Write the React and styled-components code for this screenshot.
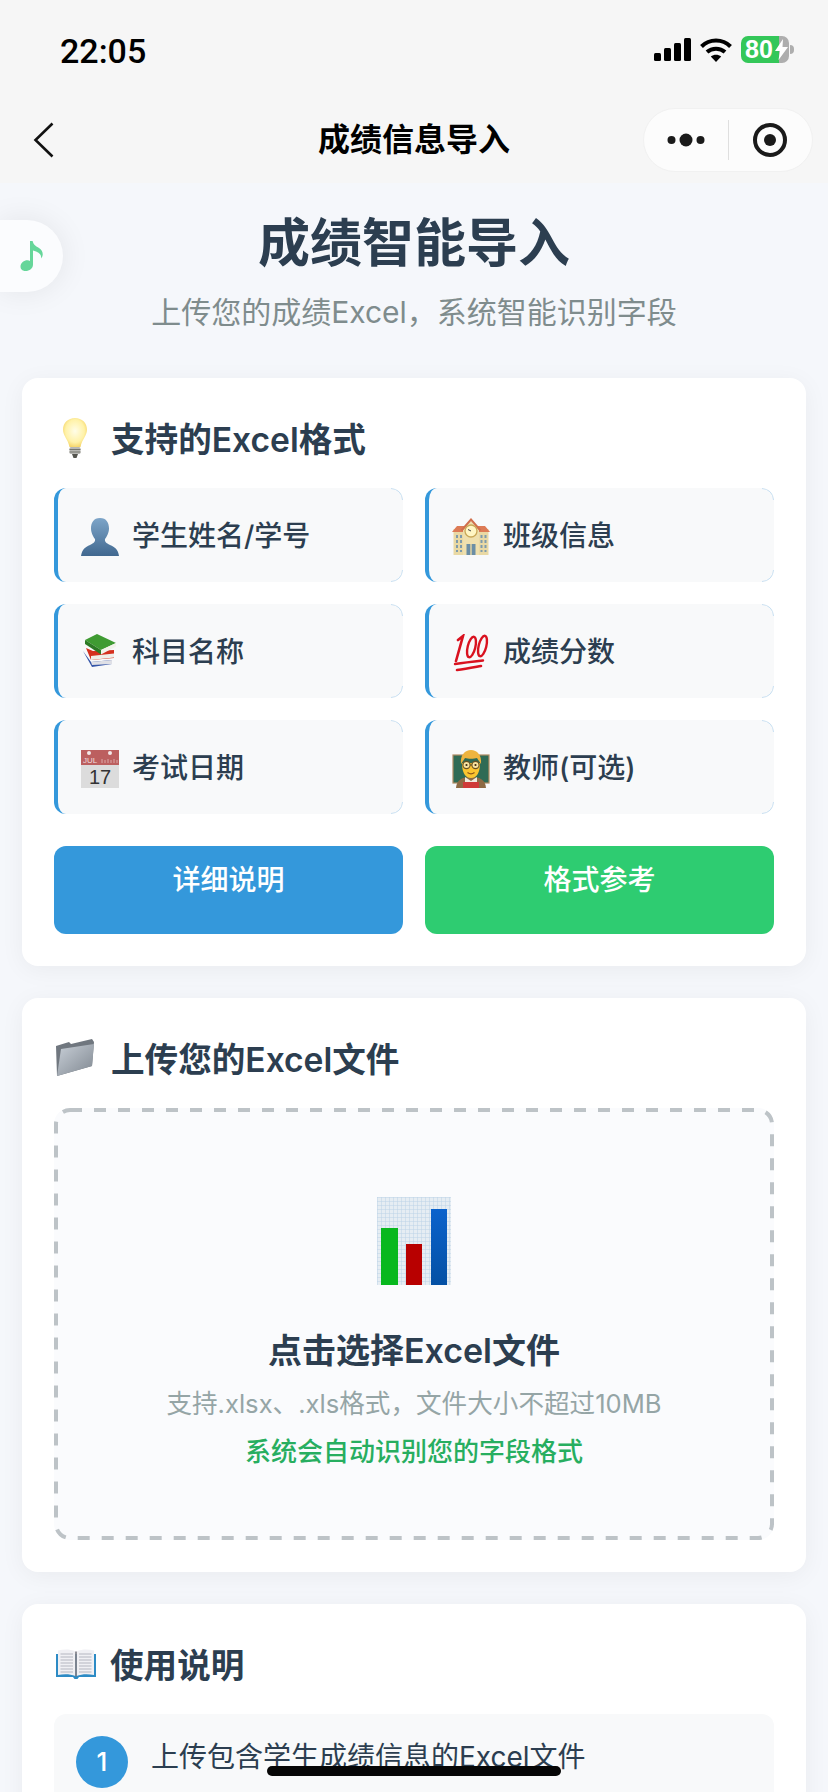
import styled, { createGlobalStyle } from "styled-components";

const GlobalStyle = createGlobalStyle`
  html, body {
    margin: 0;
    padding: 0;
    background: #f5f7fb;
  }
  * {
    box-sizing: border-box;
  }
  body {
    font-family: Inter, "Noto Sans CJK SC", sans-serif;
    color: #2c3e50;
  }
`;

const Phone = styled.div`
  position: relative;
  width: 828px;
  height: 1792px;
  overflow: hidden;
  background: #f5f7fb;
`;

const TopBar = styled.header`
  height: 183px;
  background: #f6f6f6;
  display: flex;
  flex-direction: column;
`;

const StatusBar = styled.div`
  height: 108px;
  padding: 30px 34px 0 60px;
  display: flex;
  justify-content: space-between;
  align-items: flex-start;
`;

const Clock = styled.span`
  font-family: Roboto, sans-serif;
  font-size: 34px;
  line-height: 38px;
  font-weight: 500;
  color: #000;
  padding-top: 2px;
`;

const StatusIcons = styled.div`
  display: flex;
  align-items: center;
  gap: 9px;
  padding-top: 6px;
`;

const Battery = styled.div`
  position: relative;
  width: 48px;
  height: 27px;
  margin-right: 5px;
  border-radius: 7px;
  overflow: visible;
  background: linear-gradient(to right, #34c759 0 38px, #aeaeae 38px);
  color: #fff;
  font-family: "Liberation Sans", sans-serif;
  font-size: 25px;
  line-height: 27px;
  font-weight: 700;
  padding-left: 4px;

  &::after {
    content: "";
    position: absolute;
    right: -5px;
    top: 9px;
    width: 4px;
    height: 9px;
    border-radius: 0 4px 4px 0;
    background: #aeaeae;
  }

  svg {
    position: absolute;
    right: 1px;
    top: 3px;
  }
`;

const NavBar = styled.nav`
  position: relative;
  height: 64px;
  display: flex;
  align-items: center;
  justify-content: center;
`;

const BackButton = styled.div`
  position: absolute;
  left: 33px;
  top: 14px;
  display: flex;
`;

const NavTitle = styled.h1`
  margin: 0;
  font-size: 32px;
  font-weight: 700;
  line-height: 64px;
  color: #000;
`;

const Capsule = styled.div`
  position: absolute;
  left: 643px;
  top: 0;
  width: 170px;
  height: 64px;
  border-radius: 32px;
  background: #fcfcfc;
  border: 1px solid #f1f1f1;
  display: flex;
  align-items: center;
`;

const CapsulePart = styled.div`
  flex: 1;
  display: flex;
  align-items: center;
  justify-content: center;
`;

const CapsuleDivider = styled.div`
  width: 1px;
  height: 40px;
  background: #dfdfdf;
`;

const MusicTab = styled.div`
  position: absolute;
  left: 0;
  top: 220px;
  width: 63px;
  height: 72px;
  border-radius: 0 36px 36px 0;
  background: #fbfcfe;
  box-shadow: 0 0 30px rgba(0, 0, 0, 0.08);
  display: flex;
  align-items: center;
  padding-left: 20px;
`;

const Content = styled.main`
  padding: 0 22px;
  display: flex;
  flex-direction: column;
  gap: 32px;
`;

const Hero = styled.div`
  height: 195px;
  margin-bottom: -32px;
  text-align: center;
`;

const HeroTitle = styled.h2`
  margin: 0;
  padding-top: 27px;
  font-size: 52px;
  line-height: 68px;
  font-weight: 700;
  color: #2c3e50;
`;

const HeroSub = styled.p`
  margin: 0;
  padding-top: 14px;
  font-size: 30px;
  line-height: 40px;
  color: #7f8c8d;
`;

const Card = styled.section`
  background: #fff;
  border-radius: 16px;
  padding: 32px;
  box-shadow: 0 4px 24px rgba(0, 0, 0, 0.05);
`;

const CardTitle = styled.div`
  display: flex;
  align-items: center;
  gap: ${({ $gap }) => $gap}px;
  height: 78px;
  padding: 0 0 23px ${({ $indent }) => $indent}px;
  font-size: 33.6px;
  font-weight: 600;
  color: #2c3e50;
`;

const Grid = styled.div`
  display: grid;
  grid-template-columns: repeat(2, 1fr);
  gap: 22px;
`;

const Item = styled.div`
  position: relative;
  height: 94px;
  padding: 0 0 2px 23px;
  display: flex;
  align-items: center;
  gap: 13px;
  background: #f8f9fa;
  border-left: 4px solid #3498db;
  border-radius: 12px;
  font-size: 28px;
  font-weight: 500;
  color: #2c3e50;

  &::after {
    content: "";
    position: absolute;
    inset: 0 0 0 -4px;
    border: 1px solid #c6dff2;
    border-radius: 12px;
    mask: linear-gradient(#000 0 0) top right / 12px 12px no-repeat,
      linear-gradient(#000 0 0) bottom right / 12px 12px no-repeat;
  }
`;

const ItemIcon = styled.span`
  width: 38px;
  height: 38px;
  display: flex;
  flex-shrink: 0;
  margin-top: ${({ $lift }) => ($lift ? 0 : 6)}px;
`;

const Actions = styled.div`
  display: grid;
  grid-template-columns: repeat(2, 1fr);
  gap: 22px;
  margin-top: 32px;
`;

const ActionButton = styled.button`
  height: 88px;
  padding: 0 0 20px;
  border: none;
  border-radius: 12px;
  background: ${({ $color }) => $color};
  color: #fff;
  font: inherit;
  font-size: 28px;
  line-height: 44px;
  font-weight: 500;
  text-align: center;
`;

const DropZone = styled.div`
  position: relative;
  height: 432px;
  padding-top: 89px;
  background: #fafbfd;
  border-radius: 16px;
  display: flex;
  flex-direction: column;
  align-items: center;
`;

const DashedEdge = styled.svg`
  position: absolute;
  inset: 0;
  width: 100%;
  height: 100%;

  rect {
    x: 2px;
    y: 2px;
    width: calc(100% - 4px);
    height: calc(100% - 4px);
    fill: none;
    stroke: #bdc3c7;
    stroke-width: 4px;
    stroke-dasharray: 12 12;
  }
`;

const DropTitle = styled.div`
  margin-top: 44px;
  font-size: 34px;
  line-height: 44px;
  font-weight: 600;
  color: #2c3e50;
`;

const DropHint = styled.div`
  margin-top: 13px;
  font-size: 25.6px;
  line-height: 36px;
  color: #95a5a6;
`;

const DropNote = styled.div`
  margin-top: 12px;
  font-size: 26px;
  line-height: 36px;
  font-weight: 500;
  color: #27ae60;
`;

const Step = styled.div`
  height: 140px;
  padding: 22px 22px 0;
  background: #f8f9fa;
  border-radius: 12px;
  display: flex;
  align-items: flex-start;
  gap: 23px;
`;

const StepNumber = styled.span`
  width: 52px;
  height: 52px;
  border-radius: 50%;
  background: #3498db;
  color: #fff;
  font-size: 26px;
  font-weight: 500;
  line-height: 52px;
  text-align: center;
  flex-shrink: 0;
`;

const StepText = styled.span`
  font-size: 28px;
  line-height: 42px;
  color: #2c3e50;
`;

const HomeBar = styled.div`
  position: absolute;
  left: 267px;
  top: 1766px;
  width: 294px;
  height: 10px;
  border-radius: 5px;
  background: #060606;
`;

const Signal = () => (
  <svg width="37" height="23" viewBox="0 0 37 23">
    <rect x="0" y="15" width="7" height="8" rx="1.5" fill="#000" />
    <rect x="10" y="10" width="7" height="13" rx="1.5" fill="#000" />
    <rect x="20" y="5" width="7" height="18" rx="1.5" fill="#000" />
    <rect x="30" y="0" width="7" height="23" rx="1.5" fill="#000" />
  </svg>
);

const Wifi = () => (
  <svg width="32" height="24" viewBox="0 0 32 24" fill="none" stroke="#000" strokeWidth="4">
    <path d="M1.5 8.5C9.5 0.5 22.5 0.5 30.5 8.5" />
    <path d="M7 14C12 9.5 20 9.5 25 14" />
    <path d="M16 24L10.8 18.6C13.8 16 18.2 16 21.2 18.6Z" fill="#000" stroke="none" />
  </svg>
);

const Bolt = () => (
  <svg width="13" height="21" viewBox="0 0 13 21">
    <path d="M8 0L0 12H5L3.5 21L13 8H7.5Z" fill="#fff" />
  </svg>
);

const Back = () => (
  <svg width="22" height="36" viewBox="0 0 22 36" fill="none" stroke="#111" strokeWidth="2.6">
    <path d="M19.5 1.5L2.5 18L19.5 34.5" />
  </svg>
);

const Dots = () => (
  <svg width="38" height="14" viewBox="0 0 38 14" fill="#1a1a1a">
    <circle cx="4.5" cy="7" r="4" />
    <circle cx="19" cy="7" r="6.5" />
    <circle cx="33.5" cy="7" r="4" />
  </svg>
);

const Target = () => (
  <svg width="36" height="36" viewBox="0 0 36 36">
    <circle cx="18" cy="18" r="15" fill="none" stroke="#1a1a1a" strokeWidth="4" />
    <circle cx="18" cy="18" r="6" fill="#1a1a1a" />
  </svg>
);

const MusicNote = () => (
  <svg width="24" height="30" viewBox="0 0 24 30" fill="#66d69a">
    <path d="M10 0H12.6C13.4 4 16 5 19 7C23 9.8 24 14 21 17.5C21.8 13.6 19 11 13 9.5V23.5C13 27.5 9.5 30 5.5 30C2 30 0.5 27.8 0.5 25.5C0.5 22 4 19.3 7.5 19.3C8.5 19.3 9.4 19.5 10 19.9Z" />
  </svg>
);

const Bulb = () => (
  <svg width="24" height="40" viewBox="0 0 24 40">
    <defs>
      <radialGradient id="bulbGlow" cx="0.5" cy="0.45" r="0.6">
        <stop offset="0" stopColor="#fffde8" />
        <stop offset="0.65" stopColor="#fff2a8" />
        <stop offset="1" stopColor="#f3cf5c" />
      </radialGradient>
    </defs>
    <path d="M12 0C5 0 0 5 0 11.5C0 18 5 21 6.5 29H17.5C19 21 24 18 24 11.5C24 5 19 0 12 0Z" fill="url(#bulbGlow)" />
    <rect x="6.5" y="29" width="11" height="7" rx="1.5" fill="#b8b8b4" />
    <path d="M6.5 31.5H17.5M6.5 34H17.5" stroke="#77776f" strokeWidth="1" />
    <path d="M9 36H15L13.5 40H10.5Z" fill="#55554f" />
  </svg>
);

const Person = () => (
  <svg width="38" height="38" viewBox="0 0 38 38">
    <defs>
      <linearGradient id="personFill" x1="0" y1="0" x2="0" y2="1">
        <stop offset="0" stopColor="#7da5c8" />
        <stop offset="1" stopColor="#41688f" />
      </linearGradient>
    </defs>
    <path d="M19 0C12.5 0 10 5 10 10.5C10 15 12.5 19 14 21C14.5 23.5 13 25 9 27C4 29 1 31.5 0 38H38C37 31.5 34 29 29 27C25 25 23.5 23.5 24 21C25.5 19 28 15 28 10.5C28 5 25.5 0 19 0Z" fill="url(#personFill)" />
  </svg>
);

const School = () => (
  <svg width="38" height="38" viewBox="0 0 38 38">
    <rect x="1.5" y="11" width="35" height="26" fill="#e9d9a4" />
    <path d="M0 14L5 8H33L38 14Z" fill="#dd7b55" />
    <path d="M11 12L19 3L27 12V37H11Z" fill="#efe0ae" />
    <path d="M9.5 12.5L19 1.5L28.5 12.5" fill="none" stroke="#d06f4c" strokeWidth="2" />
    <circle cx="19" cy="13" r="6" fill="#fff6c4" stroke="#c9a858" strokeWidth="1.3" />
    <path d="M19 13L16 11.5" stroke="#444" strokeWidth="1" />
    <rect x="14.5" y="26" width="9" height="11" fill="#6b8ea5" />
    <path d="M19 26V37" stroke="#e9d9a4" strokeWidth="1.4" />
    <path d="M5 17V34M9 17V34M29.5 17V34M33.5 17V34" stroke="#7f9bab" strokeWidth="2" strokeDasharray="3 2" />
  </svg>
);

const Books = () => (
  <svg width="38" height="38" viewBox="0 0 38 38">
    <path d="M2 20L11 36L31 33L31 29L10 31Z" fill="#3556a8" />
    <path d="M10 31L31 29L31 33L11 34Z" fill="#dfe0e6" />
    <path d="M5 17L10 29L33 27V19L12 20Z" fill="#d5301e" />
    <path d="M10 25L33 22.5V26.5L10 29Z" fill="#efeee8" />
    <path d="M4 9L16 3L35 12L20 19Z" fill="#3f9b32" />
    <path d="M4 9L20 19V23.5L4 13Z" fill="#2c7a24" />
    <path d="M20 19L35 12L35 15.5L20 23.5Z" fill="#f2f2ea" />
  </svg>
);

const Hundred = () => (
  <svg width="38" height="38" viewBox="0 0 38 38" fill="none" stroke="#d9121f" strokeLinecap="round">
    <path d="M4 27L11 2L6 6" strokeWidth="2.6" />
    <ellipse cx="19.5" cy="13" rx="3.8" ry="10.5" transform="rotate(14 19.5 13)" strokeWidth="2.4" />
    <ellipse cx="30.5" cy="12" rx="3.8" ry="10.5" transform="rotate(14 30.5 12)" strokeWidth="2.4" />
    <path d="M3 30C13 28.5 22 27.5 31 26.5" strokeWidth="2.4" />
    <path d="M5 36C14 35 21 33.5 29 32" strokeWidth="2.6" />
  </svg>
);

const CalendarText = styled.text`
  font-family: "Liberation Sans", sans-serif;
  font-size: ${({ $size }) => $size}px;
`;

const Calendar = () => (
  <svg width="38" height="38" viewBox="0 0 38 38">
    <rect x="0" y="0" width="38" height="38" fill="#dcdcdc" />
    <rect x="0" y="0" width="38" height="15" fill="#bc5f5f" />
    <circle cx="8" cy="3" r="2" fill="#f3e8e8" />
    <circle cx="29" cy="3" r="2" fill="#f3e8e8" />
    <CalendarText x="2" y="13" $size="8" fill="#f0dede">JUL</CalendarText>
    <path d="M21 9V13M24 10V13M27 9V13M30 10V13M33 9V13M36 10V13" stroke="#dba9a9" strokeWidth="1" />
    <CalendarText x="8" y="34" $size="20" fill="#333">17</CalendarText>
  </svg>
);

const Teacher = () => (
  <svg width="38" height="38" viewBox="0 0 38 38">
    <rect x="1" y="5" width="36" height="28" fill="#2f6b55" stroke="#b08a62" strokeWidth="1.2" />
    <path d="M4 38C4.5 30 10 27 19 27C28 27 33.5 30 34 38Z" fill="#8e6a44" />
    <path d="M13 27L19 31L25 27V38H13Z" fill="#f0ece2" />
    <rect x="11" y="32" width="16" height="6" fill="#cf3a38" />
    <path d="M10 13C10 22 13 28 19 28C25 28 28 22 28 13Z" fill="#fbc530" />
    <path d="M9 14C8 5 13 0 19 0C25 0 30 5 29 14C27 11 26 9.5 25 8C22 9 16 9 13 8C12 9.5 11 11 9 14Z" fill="#eeb43e" />
    <circle cx="14.5" cy="15" r="3.6" fill="#f8e3a0" stroke="#6a5222" strokeWidth="1.1" />
    <circle cx="23.5" cy="15" r="3.6" fill="#f8e3a0" stroke="#6a5222" strokeWidth="1.1" />
    <path d="M18 15H20" stroke="#6a5222" strokeWidth="1.1" />
    <circle cx="14.5" cy="15" r="1.1" fill="#3a2c10" />
    <circle cx="23.5" cy="15" r="1.1" fill="#3a2c10" />
    <path d="M15.5 22.5C17.5 24 20.5 24 22.5 22.5" stroke="#8a5418" strokeWidth="1.3" fill="none" />
  </svg>
);

const Folder = () => (
  <svg width="38" height="37" viewBox="0 0 38 37">
    <defs>
      <linearGradient id="folderFront" x1="0" y1="0" x2="1" y2="1">
        <stop offset="0" stopColor="#c9d0d8" />
        <stop offset="1" stopColor="#7f8790" />
      </linearGradient>
    </defs>
    <path d="M0 7L13 3L15 5L36 0L38 3L36 27L1 37Z" fill="#70777f" />
    <path d="M5 10L38 5L36 27L1 37Z" fill="url(#folderFront)" />
  </svg>
);

const OpenBook = () => (
  <svg width="40" height="30" viewBox="0 0 40 30">
    <path d="M0 5H40V28H23L21.5 30H18.5L17 28H0Z" fill="#2d8bc5" />
    <path d="M2 1.5C8 0 14 0 19.5 2.5V27C14 25 8 25 2 26Z" fill="#f0f0f4" />
    <path d="M38 1.5C32 0 26 0 20.5 2.5V27C26 25 32 25 38 26Z" fill="#f0f0f4" />
    <path d="M4.5 5H17M4.5 8H17M4.5 11H17M4.5 14H17M4.5 17H17M4.5 20H17M4.5 23H17M23 5H35.5M23 8H35.5M23 11H35.5M23 14H35.5M23 17H35.5M23 20H35.5M23 23H35.5" stroke="#b4b5c0" strokeWidth="1.2" />
    <rect x="19.2" y="2.5" width="1.6" height="25" fill="#77777f" />
  </svg>
);

const BarChart = () => (
  <svg width="74" height="88" viewBox="0 0 74 88">
    <defs>
      <pattern id="chartGrid" width="4" height="4" patternUnits="userSpaceOnUse">
        <rect width="4" height="4" fill="#e6edf3" />
        <path d="M0 0H4M0 0V4" stroke="#bdd3e8" strokeWidth="1" />
      </pattern>
      <linearGradient id="blueBar" x1="0" y1="0" x2="0" y2="1">
        <stop offset="0" stopColor="#0a62cc" />
        <stop offset="1" stopColor="#0450a4" />
      </linearGradient>
    </defs>
    <rect width="74" height="88" fill="url(#chartGrid)" />
    <rect x="4" y="31" width="17" height="57" fill="#08b81e" />
    <rect x="29" y="47" width="16" height="41" fill="#b80000" />
    <rect x="54" y="12" width="16" height="76" fill="url(#blueBar)" />
  </svg>
);

const formats = [
  { label: "学生姓名/学号", icon: <Person /> },
  { label: "班级信息", icon: <School /> },
  { label: "科目名称", icon: <Books />, lift: true },
  { label: "成绩分数", icon: <Hundred /> },
  { label: "考试日期", icon: <Calendar /> },
  { label: "教师(可选)", icon: <Teacher /> },
];

function App() {
  return (
    <Phone>
      <GlobalStyle />
      <TopBar>
        <StatusBar>
          <Clock>22:05</Clock>
          <StatusIcons>
            <Signal />
            <Wifi />
            <Battery>
              80
              <Bolt />
            </Battery>
          </StatusIcons>
        </StatusBar>
        <NavBar>
          <BackButton>
            <Back />
          </BackButton>
          <NavTitle>成绩信息导入</NavTitle>
          <Capsule>
            <CapsulePart>
              <Dots />
            </CapsulePart>
            <CapsuleDivider />
            <CapsulePart>
              <Target />
            </CapsulePart>
          </Capsule>
        </NavBar>
      </TopBar>

      <MusicTab>
        <MusicNote />
      </MusicTab>

      <Content>
        <Hero>
          <HeroTitle>成绩智能导入</HeroTitle>
          <HeroSub>上传您的成绩Excel，系统智能识别字段</HeroSub>
        </Hero>

        <Card>
          <CardTitle $indent={9} $gap={24}>
            <Bulb />
            支持的Excel格式
          </CardTitle>
          <Grid>
            {formats.map((item) => (
              <Item key={item.label}>
                <ItemIcon $lift={item.lift}>{item.icon}</ItemIcon>
                {item.label}
              </Item>
            ))}
          </Grid>
          <Actions>
            <ActionButton $color="#3498db">详细说明</ActionButton>
            <ActionButton $color="#2ecc71">格式参考</ActionButton>
          </Actions>
        </Card>

        <Card>
          <CardTitle $indent={2} $gap={17}>
            <Folder />
            上传您的Excel文件
          </CardTitle>
          <DropZone>
            <DashedEdge>
              <rect rx="14" />
            </DashedEdge>
            <BarChart />
            <DropTitle>点击选择Excel文件</DropTitle>
            <DropHint>支持.xlsx、.xls格式，文件大小不超过10MB</DropHint>
            <DropNote>系统会自动识别您的字段格式</DropNote>
          </DropZone>
        </Card>

        <Card>
          <CardTitle $indent={2} $gap={14}>
            <OpenBook />
            使用说明
          </CardTitle>
          <Step>
            <StepNumber>1</StepNumber>
            <StepText>上传包含学生成绩信息的Excel文件</StepText>
          </Step>
        </Card>
      </Content>

      <HomeBar />
    </Phone>
  );
}

export default App;
